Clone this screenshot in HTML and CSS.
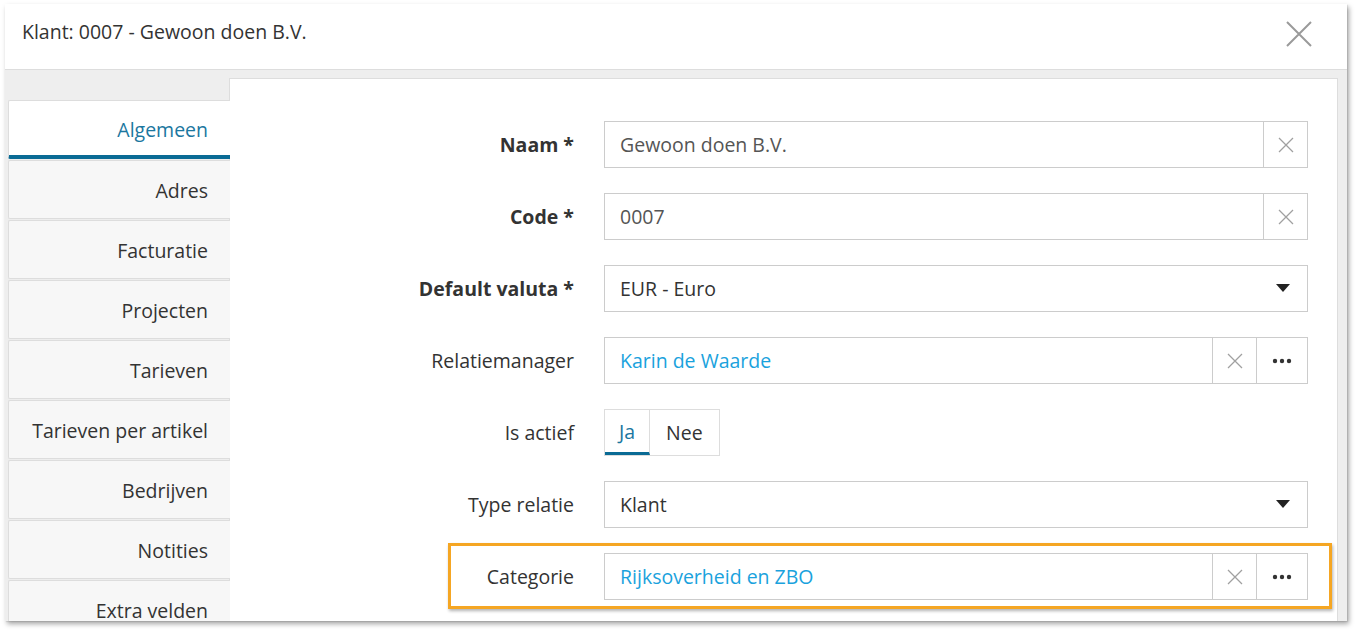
FILE: index.html
```html
<!DOCTYPE html>
<html>
<head>
<meta charset="utf-8">
<link rel="stylesheet" href="styles.css">
</head>
<body>
<div class="dialog">
  <div class="header">
    <div class="title">Klant: 0007 - Gewoon doen B.V.</div>
    <svg class="close" width="26" height="26" viewBox="0 0 26 26"><path d="M1 1 L25 25 M25 1 L1 25" stroke="#9a9a9a" stroke-width="2" fill="none"/></svg>
  </div>
  <div class="body">
    <div class="tabs">
      <div class="tab active">Algemeen</div>
      <div class="tab">Adres</div>
      <div class="tab">Facturatie</div>
      <div class="tab">Projecten</div>
      <div class="tab">Tarieven</div>
      <div class="tab">Tarieven per artikel</div>
      <div class="tab">Bedrijven</div>
      <div class="tab">Notities</div>
      <div class="tab">Extra velden</div>
    </div>
    <div class="panel">
      <div class="row">
        <div class="label bold">Naam *</div>
        <div class="field">
          <div class="value muted">Gewoon doen B.V.</div>
          <div class="btn clear"><svg width="16" height="16" viewBox="0 0 16 16"><path d="M1 1 L15 15 M15 1 L1 15" stroke="#a0a0a0" stroke-width="1.3" fill="none"/></svg></div>
        </div>
      </div>
      <div class="row">
        <div class="label bold">Code *</div>
        <div class="field">
          <div class="value muted">0007</div>
          <div class="btn clear"><svg width="16" height="16" viewBox="0 0 16 16"><path d="M1 1 L15 15 M15 1 L1 15" stroke="#a0a0a0" stroke-width="1.3" fill="none"/></svg></div>
        </div>
      </div>
      <div class="row">
        <div class="label bold">Default valuta *</div>
        <div class="field">
          <div class="value">EUR - Euro</div>
          <div class="caret"><svg width="14" height="8" viewBox="0 0 14 8"><path d="M0 0 H14 L7 8 Z" fill="#222"/></svg></div>
        </div>
      </div>
      <div class="row">
        <div class="label">Relatiemanager</div>
        <div class="field">
          <div class="value link">Karin de Waarde</div>
          <div class="btn clear"><svg width="16" height="16" viewBox="0 0 16 16"><path d="M1 1 L15 15 M15 1 L1 15" stroke="#a0a0a0" stroke-width="1.3" fill="none"/></svg></div>
          <div class="btn more"><svg width="20" height="6" viewBox="0 0 20 6"><circle cx="3" cy="3" r="2.2" fill="#333"/><circle cx="10" cy="3" r="2.2" fill="#333"/><circle cx="17" cy="3" r="2.2" fill="#333"/></svg></div>
        </div>
      </div>
      <div class="row">
        <div class="label">Is actief</div>
        <div class="toggle">
          <div class="opt on">Ja</div>
          <div class="opt">Nee</div>
        </div>
      </div>
      <div class="row">
        <div class="label">Type relatie</div>
        <div class="field">
          <div class="value">Klant</div>
          <div class="caret"><svg width="14" height="8" viewBox="0 0 14 8"><path d="M0 0 H14 L7 8 Z" fill="#222"/></svg></div>
        </div>
      </div>
      <div class="row highlight">
        <div class="label">Categorie</div>
        <div class="field">
          <div class="value link">Rijksoverheid en ZBO</div>
          <div class="btn clear"><svg width="16" height="16" viewBox="0 0 16 16"><path d="M1 1 L15 15 M15 1 L1 15" stroke="#a0a0a0" stroke-width="1.3" fill="none"/></svg></div>
          <div class="btn more"><svg width="20" height="6" viewBox="0 0 20 6"><circle cx="3" cy="3" r="2.2" fill="#333"/><circle cx="10" cy="3" r="2.2" fill="#333"/><circle cx="17" cy="3" r="2.2" fill="#333"/></svg></div>
        </div>
      </div>
    </div>
  </div>
</div>
</body>
</html>
```

FILE: styles.css
```css
html, body {
  margin: 0;
  padding: 0;
  background: #fff;
  width: 1355px;
  height: 630px;
  overflow: hidden;
}
body {
  font-family: "Open Sans", "Liberation Sans", sans-serif;
  color: #333;
  font-size: 19.5px;
}
.dialog {
  margin: 4px 0 0 5px;
  width: 1342px;
  height: 617px;
  background: #eee;
  box-shadow: 1px 1px 1px rgba(0,0,0,0.08), 2px 3px 5px rgba(0,0,0,0.35);
  display: flex;
  flex-direction: column;
  overflow: hidden;
}
.header {
  height: 66px;
  flex: none;
  background: #fff;
  border-bottom: 1px solid #ddd;
  display: flex;
  justify-content: space-between;
  align-items: flex-start;
  padding: 14px 35px 0 17px;
  box-sizing: border-box;
}
.title {
  line-height: 28px;
  color: #333;
}
.close {
  margin-top: 3px;
}
.body {
  flex: 1;
  display: flex;
  padding-top: 8px;
  min-height: 0;
}
.tabs {
  width: 222px;
  margin-left: 3px;
  padding-top: 22px;
  flex: none;
  position: relative;
  z-index: 1;
}
.tab {
  height: 59px;
  box-sizing: border-box;
  margin-bottom: 1px;
  background: #f7f7f7;
  border: 1px solid #ddd;
  border-right: none;
  border-radius: 2px 0 0 2px;
  text-align: right;
  padding-right: 22px;
  line-height: 59px;
  color: #333;
  white-space: nowrap;
}
.tab.active {
  background: #fff;
  color: #1b77a0;
  height: 59px;
  border-bottom: 4px solid #0a6b95;
  line-height: 58px;
  margin-bottom: 1px;
  border-right: none;
}
.panel {
  flex: 1;
  margin-left: -1px;
  margin-right: 9px;
  background: #fff;
  border: 1px solid #ddd;
  border-bottom: none;
  padding-top: 42px;
  display: flex;
  flex-direction: column;
  align-items: flex-start;
  gap: 25px;
}
.row {
  display: flex;
  align-items: stretch;
  height: 47px;
  position: relative;
}
.label {
  width: 344px;
  padding-right: 30px;
  box-sizing: content-box;
  text-align: right;
  line-height: 48px;
  color: #333;
}
.label.bold {
  font-weight: bold;
}
.field {
  width: 704px;
  box-sizing: border-box;
  border: 1px solid #ccc;
  display: flex;
  align-items: stretch;
}
.value {
  flex: 1;
  padding-left: 15px;
  line-height: 46px;
  color: #333;
}
.value.muted {
  color: #555;
}
.value.link {
  color: #1aa2dd;
}
.btn {
  border-left: 1px solid #ccc;
  display: flex;
  align-items: center;
  justify-content: center;
}
.btn.clear {
  width: 43px;
}
.btn.more {
  width: 50px;
}
.caret {
  width: 48px;
  display: flex;
  align-items: center;
  justify-content: center;
  padding-bottom: 1px;
}
.toggle {
  display: flex;
  border: 1px solid #ddd;
  box-sizing: border-box;
}
.opt {
  line-height: 46px;
  padding: 0 16px;
  color: #333;
}
.opt.on {
  color: #1b77a0;
  padding: 0 14px;
  border-right: 1px solid #ddd;
  border-bottom: 3px solid #0a6b95;
  line-height: 43px;
}
.highlight::after {
  content: "";
  position: absolute;
  left: 218px;
  right: -24px;
  top: -10px;
  bottom: -9px;
  border: 3px solid #f5a623;
  box-shadow: 1px 2px 3px rgba(0,0,0,0.3);
  pointer-events: none;
}
```
